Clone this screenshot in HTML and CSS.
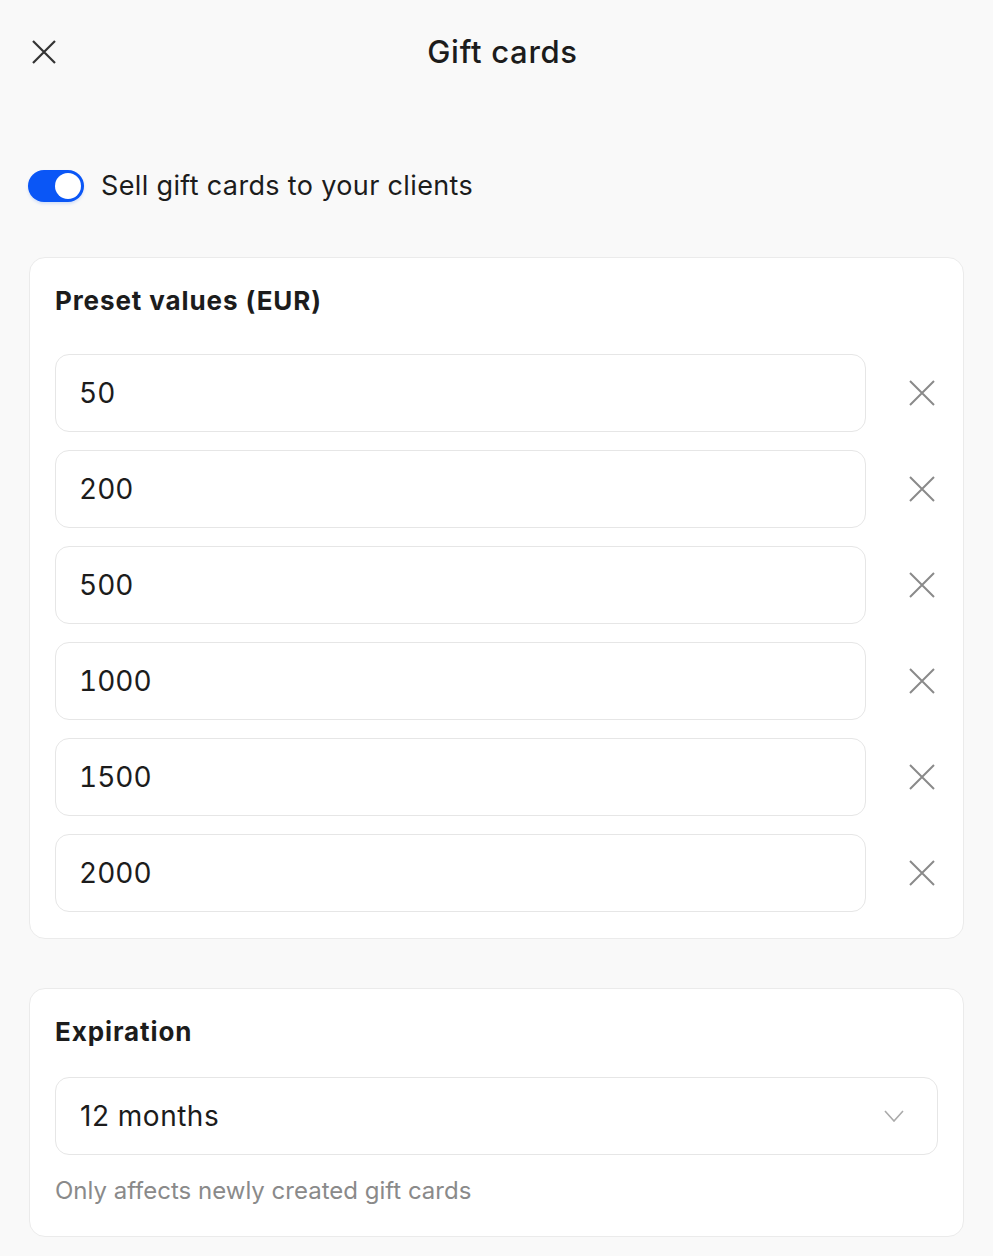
FILE: index.html
```html
<!DOCTYPE html>
<html lang="en">
<head>
<meta charset="utf-8">
<title>Gift cards</title>
<link rel="stylesheet" href="styles.css">
</head>
<body>
<div class="page">
  <header class="header">
    <button class="close-btn" aria-label="Close">
      <svg width="24" height="24" viewBox="0 0 24 24"><path d="M1 1L23 23M23 1L1 23" stroke="#333" stroke-width="2.2" fill="none"/></svg>
    </button>
    <h1 class="title">Gift cards</h1>
    <span class="header-spacer"></span>
  </header>

  <label class="toggle-row">
    <span class="toggle"><span class="knob"></span></span>
    <span class="toggle-label">Sell gift cards to your clients</span>
  </label>

  <section class="card card-presets">
    <h2 class="card-title">Preset values (EUR)</h2>
    <div class="preset-list">
      <div class="preset-row"><div class="field">50</div><button class="remove-btn" aria-label="Remove"><svg width="26" height="26" viewBox="0 0 26 26"><path d="M1 1L25 25M25 1L1 25" stroke="#8a8a8a" stroke-width="2" fill="none"/></svg></button></div>
      <div class="preset-row"><div class="field">200</div><button class="remove-btn" aria-label="Remove"><svg width="26" height="26" viewBox="0 0 26 26"><path d="M1 1L25 25M25 1L1 25" stroke="#8a8a8a" stroke-width="2" fill="none"/></svg></button></div>
      <div class="preset-row"><div class="field">500</div><button class="remove-btn" aria-label="Remove"><svg width="26" height="26" viewBox="0 0 26 26"><path d="M1 1L25 25M25 1L1 25" stroke="#8a8a8a" stroke-width="2" fill="none"/></svg></button></div>
      <div class="preset-row"><div class="field">1000</div><button class="remove-btn" aria-label="Remove"><svg width="26" height="26" viewBox="0 0 26 26"><path d="M1 1L25 25M25 1L1 25" stroke="#8a8a8a" stroke-width="2" fill="none"/></svg></button></div>
      <div class="preset-row"><div class="field">1500</div><button class="remove-btn" aria-label="Remove"><svg width="26" height="26" viewBox="0 0 26 26"><path d="M1 1L25 25M25 1L1 25" stroke="#8a8a8a" stroke-width="2" fill="none"/></svg></button></div>
      <div class="preset-row"><div class="field">2000</div><button class="remove-btn" aria-label="Remove"><svg width="26" height="26" viewBox="0 0 26 26"><path d="M1 1L25 25M25 1L1 25" stroke="#8a8a8a" stroke-width="2" fill="none"/></svg></button></div>
    </div>
  </section>

  <section class="card card-expiration">
    <h2 class="card-title">Expiration</h2>
    <div class="select">
      <span>12 months</span>
      <svg width="20" height="12" viewBox="0 0 20 12"><path d="M1 1L10 11L19 1" stroke="#aaaaaa" stroke-width="1.6" fill="none"/></svg>
    </div>
    <p class="hint">Only affects newly created gift cards</p>
  </section>
</div>
</body>
</html>
```
FILE: styles.css
```css
* { box-sizing: border-box; }
html, body { margin: 0; padding: 0; }
body {
  background: #f9f9f9;
  font-family: Inter, "Noto Sans", "Liberation Sans", sans-serif;
  color: #1c1c1c;
}
.page {
  padding: 0 29px 20px 29px;
}
.header {
  height: 104px;
  display: grid;
  grid-template-columns: 1fr auto 1fr;
  align-items: center;
}
.close-btn {
  background: none;
  border: 0;
  padding: 0;
  margin-left: 3px;
  width: 24px;
  height: 24px;
  justify-self: start;
  display: flex;
}
.title {
  margin: 0;
  padding-left: 12px;
  font-size: 31px;
  font-weight: 500;
  letter-spacing: 0.7px;
  line-height: 36px;
  color: #1c1c1c;
}
.toggle-row {
  margin-top: 66px;
  display: flex;
  align-items: center;
  gap: 17px;
}
.toggle {
  width: 56px;
  height: 32px;
  border-radius: 16px;
  background: #0a56f6;
  display: flex;
  align-items: center;
  justify-content: flex-end;
  padding: 0 3px;
  margin-left: -1px;
  box-shadow: 0 2px 3px rgba(10, 86, 246, 0.15);
}
.knob {
  width: 26px;
  height: 26px;
  border-radius: 50%;
  background: #fff;
}
.toggle-label {
  font-size: 27px;
  letter-spacing: 0.35px;
  line-height: 32px;
  color: #1c1c1c;
}
.card {
  background: #fff;
  border: 1px solid #ebebeb;
  border-radius: 16px;
  padding: 27px 25px 26px 25px;
}
.card-presets {
  margin-top: 55px;
}
.card-expiration {
  margin-top: 49px;
  padding-bottom: 29px;
}
.card-title {
  margin: 0;
  font-size: 26px;
  font-weight: 700;
  letter-spacing: 0.9px;
  line-height: 32px;
  color: #1c1c1c;
}
.card-presets .card-title { margin-bottom: 37px; }
.card-expiration .card-title { margin-bottom: 29px; }
.preset-list {
  display: flex;
  flex-direction: column;
  gap: 18px;
}
.preset-row {
  display: flex;
  align-items: center;
  gap: 43px;
}
.field {
  flex: 1;
  height: 78px;
  border: 1px solid #e6e6e6;
  border-radius: 14px;
  display: flex;
  align-items: center;
  padding-left: 23px;
  font-size: 28px;
  letter-spacing: 0;
  font-variant-numeric: tabular-nums;
  color: #1c1c1c;
}
.remove-btn {
  background: none;
  border: 0;
  padding: 0;
  width: 29px;
  height: 26px;
  display: flex;
}
.select {
  height: 78px;
  border: 1px solid #e6e6e6;
  border-radius: 14px;
  display: flex;
  align-items: center;
  justify-content: space-between;
  padding: 0 33px 0 24px;
  font-size: 28px;
  letter-spacing: 0.5px;
  color: #1c1c1c;
}
.hint {
  margin: 20px 0 0 0;
  font-size: 24px;
  line-height: 32px;
  color: #8a8a8a;
}
```
